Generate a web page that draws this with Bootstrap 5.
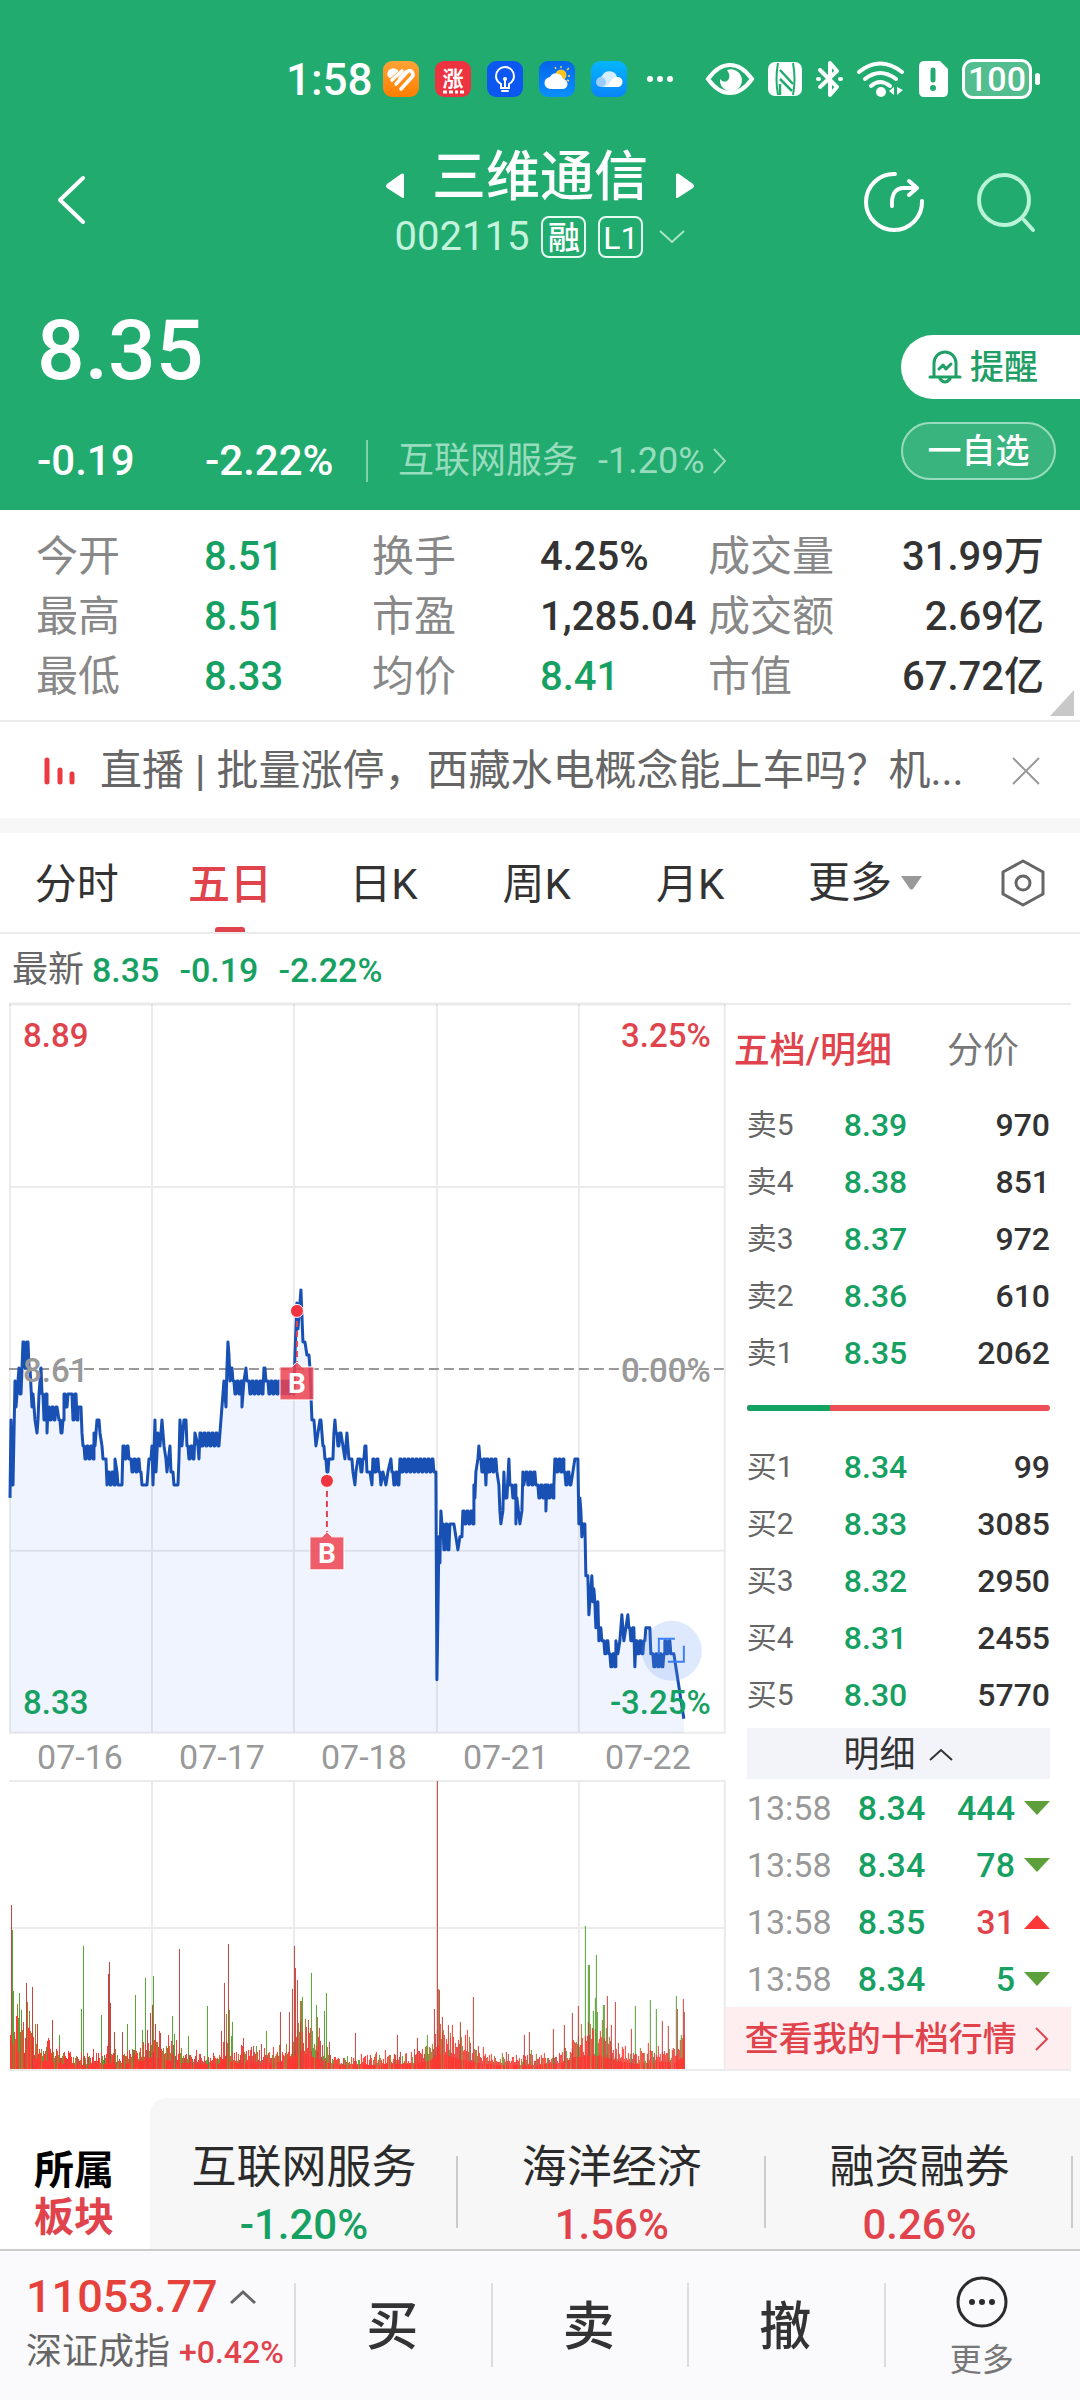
<!DOCTYPE html>
<html lang="zh-CN">
<head>
<meta charset="utf-8">
<meta name="viewport" content="width=device-width, initial-scale=1">
<title>三维通信 002115</title>
<link href="https://cdn.jsdelivr.net/npm/bootstrap@5.3.0/dist/css/bootstrap.min.css" rel="stylesheet">
<style>
:root{--down:#16a163;--up:#e0434c;--brand:#22ab6f;--ink:#333;--rule:#ebebeb}
body{font-family:Roboto,"Noto Sans CJK SC",sans-serif;color:var(--ink);background:#fff;line-height:1}
a{color:inherit;text-decoration:none}
button{background:none;border:0;padding:0;color:inherit;font-weight:inherit}
svg{display:block;flex:none;overflow:visible}
th{font-weight:400}
.down{color:var(--down)} .up{color:var(--up)} .muted{color:#777}
.medium{font-weight:500}
.f30{font-size:30px}.f32{font-size:32px}.f34{font-size:34px}.f36{font-size:36px}.f40{font-size:40px}.f42{font-size:42px}

.hero{background:var(--brand);color:#fff}
.statusbar{padding:59px 40px 0 286px;height:99px}
.clock{font-size:44px;line-height:44px;width:97px;padding-top:2px}
.appicons{gap:16px}
.sys{gap:14px}
.battery{width:70px;height:40px;border:3px solid #fff;border-radius:11px;background:#ffffff38;font-size:34px;line-height:34px;text-align:center}
.nub{width:5px;height:12px;border-radius:3px;background:#fff;margin-left:3px}
.titlebar{padding-top:50px}
.side{flex:1 1 0;padding-bottom:4px}
.stock{font-size:54px;line-height:58px}
.codeline{height:42px;margin-top:9px;gap:12px}
.tagbox{height:42px;width:45px;border:2px solid #e6fff3;border-radius:8px;line-height:40px;text-align:center}
.pale{color:#c3f3dc}
.quote{padding:48px 0 28px 37px}
.price{font-size:84px;line-height:90px}
.change{margin-top:44px;height:42px}
.change .c1{width:168px}.change .c2{width:161px}
.industry{border-left:2px solid #7fd0ab;color:#97dcbd;padding-left:30px;height:42px}
.remind{width:179px;height:64px;margin-top:29px;background:#fff;color:#1f9f66;border-radius:32px 0 0 32px;padding-left:27px;gap:8px}
.watch{width:155px;height:58px;margin:23px 24px 0 0;border:2px solid #97dcbd;border-radius:29px;background:#ffffff1c}

.stats{display:grid;grid-template-columns:repeat(6,1fr);padding:17px 36px 13px 36px;line-height:60px;border-bottom:2px solid var(--rule)}
.stats dt{font-weight:400;font-size:42px;color:#888}
.stats dd{margin:0;font-size:40px;font-weight:500;white-space:nowrap}
.stats dd.last{text-align:right}
.fold{right:6px;bottom:6px}

.news{height:96px;padding:2px 40px 0 44px;color:#666}
.news .headline{margin-left:25px;line-height:60px}
.news .bar{margin:0 11px}
.band{height:15px;background:#f7f7f7}

.tabs{height:101px;border-bottom:2px solid var(--rule)}
.tabs button{flex:0 0 14.2%;line-height:104px;position:relative;height:99px}
.tabs .wide{flex:1 1 0;padding-right:36px}
.tabs .cog{flex:0 0 80px}
.tabs .on::after{content:"";position:absolute;left:50%;bottom:0;width:30px;height:5px;margin-left:-15px;border-radius:3px 3px 0 0;background:var(--up)}
.latest{height:69px;padding:2px 0 0 12px;color:#666}
.latest .figs{font-size:34px;gap:20px}

.board{margin:0 9px}
.pane{flex:0 0 67.5%;min-width:0}
.pane svg{width:100%;height:auto}
.lab{position:absolute;font-size:33px;line-height:34px;font-weight:500}
.lab.l{left:14px}.lab.r{right:15px}
.lab.t{top:16px}.lab.m{top:351px;color:#999}.lab.b{bottom:14px}
.days{height:46px;line-height:46px;color:#999;padding:0 7px 0 0}
.depth{border-top:2px solid var(--rule);border-bottom:2px solid var(--rule)}
.depthtabs{height:91px;padding:0 52px 0 8px;line-height:93px}
.inner{margin:0 21px}
.inner tr{height:57px}
.inner td,.inner th{padding:0;vertical-align:middle}
.book th{width:97px;color:#666}
.balance{height:57px;padding-bottom:3px}
.balance .track{height:6px;border-radius:3px;overflow:hidden;background:#ee4f55}
.balance .fill{background:#12a363}
.detail{height:51px;background:#f3f4f9;margin-top:5px;padding-top:2px;gap:14px;width:100%}
.ticks td:first-child{width:111px;color:#999}
.ticks td:last-child{width:35px}
.ten{height:62px;background:#ffeef0;color:var(--up);padding:2px 22px 0 19px}

.sector{padding-top:27px;background:#fff}
.sector .name{width:150px;padding:49px 0 0 34px;font-size:40px;line-height:47px}
.sector .list{background:#f7f7f7;border-radius:16px 0 0 0;height:151px}
.sector .item{flex:0 0 33.1%;padding-top:41px;text-align:center;position:relative}
.sector .item::after{content:"";position:absolute;right:0;top:58px;height:72px;border-right:2px solid #ccc}
.sector .item b{display:block;font-weight:400;font-size:45px;line-height:58px;color:#2b2b2b}
.sector .item span{display:block;font-size:42px;font-weight:500;line-height:56px}

.dock{height:151px;background:#fafafc;border-top:2px solid #ccc}
.index{width:294px;padding:20px 0 0 26px}
.index .num{font-size:45px;line-height:52px;color:#e6423c;gap:12px}
.index .sub{line-height:58px;color:#666;gap:9px}
.act{flex:1 1 0;font-size:52px;position:relative;padding-top:4px}
.act::before{content:"";position:absolute;left:0;top:32px;height:84px;border-left:2px solid #ddd}
.act.more{padding-top:0}
</style>
</head>
<body>

<header class="hero">
  <div class="statusbar d-flex align-items-center">
    <div class="clock medium">1:58</div>
    <div class="appicons d-flex align-items-center">
      <svg width="36" height="36" viewBox="0 0 36 36"><defs><linearGradient id="o" x2="0" y2="1"><stop stop-color="#ffa336"/><stop offset="1" stop-color="#ff7e00"/></linearGradient><linearGradient id="s" x2="0" y2="1"><stop stop-color="#0464ea"/><stop offset="1" stop-color="#0a90ff"/></linearGradient><linearGradient id="c" x2="0" y2="1"><stop stop-color="#05b6fb"/><stop offset="1" stop-color="#0a84fb"/></linearGradient></defs><rect width="36" height="36" rx="9" fill="url(#o)"/><g stroke="#fff" stroke-width="3.600" stroke-linecap="round" fill="none"><path d="M6 14q0-4 4-5 2 0 3 1l-6 5"/><path d="M9 19L19 10"/><path d="M13 23L24 11q3-3 5 0t0 5L18 28"/><path d="M17 17l6-6"/></g></svg>
      <svg width="36" height="36" viewBox="0 0 36 36"><rect width="36" height="36" rx="9" fill="#ee3340"/><text x="18" y="25" font-size="21" font-weight="700" fill="#fff" text-anchor="middle" font-family="Noto Sans CJK SC">涨</text><path d="M8 31h4m2 0h4m2 0h3m2 0h4" stroke="#fff" stroke-width="3"/></svg>
      <svg width="36" height="36" viewBox="0 0 36 36"><rect width="36" height="36" rx="9" fill="#0b57f0"/><path d="M14 27v-4q-5-3-5-8a9 9 0 0118 0q0 5-5 8v4zM15 30h6M18 26v-8" fill="none" stroke="#fff" stroke-width="2" stroke-linecap="round"/><circle cx="18" cy="18" r="2" fill="#fff"/></svg>
      <svg width="36" height="36" viewBox="0 0 36 36"><rect width="36" height="36" rx="9" fill="url(#s)"/><circle cx="22" cy="14" r="5.500" fill="#ffc21f"/><path d="M22 7V5M28 9l2-2M29 15h2M17 8l-1-2M28 19l2 1" stroke="#ffd257" stroke-width="1.400"/><path d="M12 28a6 6 0 01-1-12 7 7 0 0113 2 5 5 0 01-1 10z" fill="#fff"/></svg>
      <svg width="36" height="36" viewBox="0 0 36 36"><rect width="36" height="36" rx="9" fill="url(#c)"/><path d="M12 26a6 6 0 01-1-11 8 8 0 0115 1 5 5 0 01-1 10z" fill="#d6edff"/><path d="M14 26q4-2 6-6t6-4a5 5 0 011 10z" fill="#fff"/><circle cx="10" cy="21" r="5" fill="#9ccdfc"/></svg>
    </div>
    <svg class="ms-3 me-auto" width="34" height="8" viewBox="0 0 34 8" fill="#fff"><circle cx="7" cy="4" r="3"/><circle cx="17" cy="4" r="3"/><circle cx="27" cy="4" r="3"/></svg>
    <div class="sys d-flex align-items-center">
      <svg width="48" height="34" viewBox="0 0 48 34"><path d="M2 17Q12 3 24 3t22 14Q36 31 24 31T2 17z" fill="none" stroke="#fff" stroke-width="4"/><path d="M21 8a11 11 0 11-7 9q3 4 7 2 5-4 0-11z" fill="#fff"/></svg>
      <svg width="34" height="34" viewBox="0 0 34 34"><rect width="34" height="34" rx="7" fill="#fff"/><path d="M10 1q-3 16 0 32M25 1q3 16 0 32" stroke="#22ab6f" stroke-width="2" fill="none"/><path d="M12 8l13 14M12 17l12 12M12 22v11" stroke="#22ab6f" stroke-width="2.500"/></svg>
      <svg width="27" height="38" viewBox="0 0 27 38" fill="none" stroke="#fff" stroke-width="4" stroke-linejoin="round" stroke-linecap="round"><path d="M4 10l17 17-7 8V3l7 8L4 27"/><path d="M2 19h1M24 19h1"/></svg>
      <svg width="48" height="36" viewBox="0 0 48 36" fill="none" stroke="#fff" stroke-width="4" stroke-linecap="round"><path d="M2 11q21-17 43 0M8 18q15-12 31 0M14 25q9-8 19 0"/><circle cx="24" cy="31" r="5" fill="#fff" stroke="none"/><path d="M37 26v8l-5-4zM40 26v8l6-5z" fill="#fff" stroke="none"/></svg>
      <svg width="29" height="36" viewBox="0 0 29 36"><path d="M5 0h16l8 8v22q0 6-5 6H5q-5 0-5-6V6q0-6 5-6z" fill="#fff"/><path d="M14 9v10" stroke="#22ab6f" stroke-width="5" stroke-linecap="round"/><circle cx="14" cy="27" r="3" fill="#22ab6f"/></svg>
      <div class="d-flex align-items-center"><div class="battery medium">100</div><div class="nub"></div></div>
    </div>
  </div>

  <div class="titlebar d-flex align-items-center">
    <div class="side ps-4"><button type="button" aria-label="返回" class="ms-4"><svg class="ms-2" width="30" height="50" viewBox="0 0 30 50" fill="none" stroke="#fff" stroke-width="4" stroke-linecap="round" stroke-linejoin="round"><path d="M27 3L4 25l23 22"/></svg></button></div>
    <div>
      <div class="d-flex justify-content-center align-items-center">
        <button type="button" aria-label="上一只" class="mt-3"><svg width="18" height="26" viewBox="0 0 18 26" fill="#fff"><path d="M18 1v24q-2 0-3-1L1 15q-2-2 0-4L15 1q1-1 3 0z"/></svg></button>
        <h1 class="stock medium mb-0 mx-4 px-1">三维通信</h1>
        <button type="button" aria-label="下一只" class="mt-3"><svg width="18" height="26" viewBox="0 0 18 26" fill="#fff"><path d="M0 1v24q2 0 3-1l14-9q2-2 0-4L3 1Q2 0 0 1z"/></svg></button>
      </div>
      <div class="codeline d-flex align-items-center justify-content-center">
        <span class="pale f40">002115</span><span class="tagbox medium f32">融</span><span class="tagbox f32">L1</span>
        <svg class="ms-1" width="26" height="14" viewBox="0 0 26 14" fill="none" stroke="#a9e6ca" stroke-width="2"><path d="M1 1l12 11L25 1"/></svg>
      </div>
    </div>
    <div class="side d-flex justify-content-end pe-4">
      <button type="button" aria-label="分享" class="me-5"><svg class="me-1" width="60" height="60" viewBox="0 0 60 60" fill="none" stroke="#fff" stroke-width="4" stroke-linecap="round" stroke-linejoin="round"><path d="M31 2a28 28 0 1027 27"/><path d="M28 34q-1-18 12-18h13M45 9l8 7-8 7"/></svg></button>
      <button type="button" aria-label="搜索" class="me-3"><svg class="me-1" width="60" height="60" viewBox="0 0 60 60" fill="none" stroke="#b9f3d8" stroke-width="4" stroke-linecap="round"><circle cx="28" cy="28" r="25"/><path d="M48 48l9 10"/></svg></button>
    </div>
  </div>

  <div class="quote d-flex justify-content-between align-items-start">
    <div>
      <div class="price medium">8.35</div>
      <div class="change d-flex align-items-center f42">
        <span class="c1 medium">-0.19</span><span class="c2 medium">-2.22%</span>
        <a href="#" class="industry d-flex align-items-center f36"><span>互联网服务</span><span class="ms-3 ps-1">-1.20%</span>
          <svg class="ms-2" width="14" height="26" viewBox="0 0 14 26" fill="none" stroke="currentColor" stroke-width="2"><path d="M1 1l11 12L1 25"/></svg></a>
      </div>
    </div>
    <div class="d-flex flex-column align-items-end">
      <button type="button" class="remind medium f34 d-flex align-items-center">
        <svg width="34" height="36" viewBox="0 0 34 36" fill="none" stroke="#1f9f66" stroke-width="3" stroke-linejoin="round" stroke-linecap="round"><path d="M6 28V14a11 11 0 0122 0v14M2 28h30M12 30q5 6 10 0"/><path d="M11 20l4-4 3 4 5-5"/></svg>提醒</button>
      <button type="button" class="watch medium f34">一自选</button>
    </div>
  </div>
</header>

<main>
  <div class="position-relative">
    <dl class="stats mb-0">
      <dt>今开</dt><dd class="down">8.51</dd><dt>换手</dt><dd>4.25%</dd><dt>成交量</dt><dd class="last">31.99万</dd>
      <dt>最高</dt><dd class="down">8.51</dd><dt>市盈</dt><dd>1,285.04</dd><dt>成交额</dt><dd class="last">2.69亿</dd>
      <dt>最低</dt><dd class="down">8.33</dd><dt>均价</dt><dd class="down">8.41</dd><dt>市值</dt><dd class="last">67.72亿</dd>
    </dl>
    <svg class="fold position-absolute" width="24" height="26" viewBox="0 0 24 26"><path d="M24 0v26H0z" fill="#c8c8c8"/></svg>
  </div>

  <div class="news d-flex align-items-center">
    <svg width="31" height="28" viewBox="0 0 31 28" stroke="#ec3a43" stroke-width="5" stroke-linecap="round"><path d="M3 3v22M16 13v12M28 17v8"/></svg>
    <a href="#" class="headline f42 flex-grow-1 text-nowrap">直播<span class="bar medium">|</span>批量涨停，西藏水电概念能上车吗？机...</a>
    <button type="button" aria-label="关闭"><svg width="28" height="28" viewBox="0 0 28 28" stroke="#999" stroke-width="2"><path d="M1 1l26 26M27 1L1 27"/></svg></button>
  </div>
  <div class="band"></div>

  <nav class="tabs d-flex align-items-center f42" aria-label="周期">
    <button type="button">分时</button>
    <button type="button" class="on up medium">五日</button>
    <button type="button">日K</button>
    <button type="button">周K</button>
    <button type="button">月K</button>
    <button type="button" class="wide d-flex align-items-center justify-content-center">更多<svg class="ms-2" width="23" height="14" viewBox="0 0 23 14"><path d="M1 0h21l-9 13q-2 1-3 0z" fill="#999"/></svg></button>
    <button type="button" class="cog" aria-label="设置"><svg width="46" height="48" viewBox="0 0 46 48" fill="none" stroke="#666" stroke-width="3" stroke-linejoin="round"><path d="M23 2l20 11v22L23 46 3 35V13z"/><circle cx="23" cy="24" r="7"/></svg></button>
  </nav>

  <div class="latest f36 d-flex align-items-center"><span>最新</span><div class="figs down medium d-flex ms-2"><span>8.35</span><span>-0.19</span><span>-2.22%</span></div></div>

  <section class="board d-flex">
    <div class="pane">
      <div class="position-relative">
        <svg viewBox="9 0 717 731" role="img" aria-label="五日分时走势">
          <path id="area" fill="#eff4fe"/>
          <g stroke="#000" stroke-opacity=".08" stroke-width="2" fill="none"><path d="M10 1v730M152 1v730M294 1v730M437 1v730M579 1v730M725 1v730M9 184h717M9 548h717M9 730h717"/><path d="M9 1h717" stroke-width="3"/></g>
          <path d="M9 366h717" stroke="#999" stroke-width="2" stroke-dasharray="10 5"/>
          <path id="line" fill="none" stroke="#1850b4" stroke-width="3" stroke-linejoin="round"/>
          <g id="marks"></g>
          <circle cx="672" cy="648" r="30" fill="#5f92f5" fill-opacity=".2"/>
          <path d="M659 651v-15h16M684 643v16h-16" fill="none" stroke="#3b7ff2" stroke-width="2"/>
        </svg>
        <span class="lab l t up">8.89</span><span class="lab r t up">3.25%</span>
        <span class="lab l m">8.61</span><span class="lab r m">0.00%</span>
        <span class="lab l b down">8.33</span><span class="lab r b down">-3.25%</span>
      </div>
      <div class="days d-flex f34 text-center">
        <span class="flex-fill">07-16</span><span class="flex-fill">07-17</span><span class="flex-fill">07-18</span><span class="flex-fill">07-21</span><span class="flex-fill">07-22</span>
      </div>
      <svg viewBox="9 0 717 291" role="img" aria-label="成交量">
        <path d="M152 1v289M294 1v289M437 1v289M579 1v289M725 1v289M9 1h717M9 148h717M9 290h717" stroke="#ebebeb" stroke-width="2"/>
        <g id="vol" stroke-width="1"></g>
      </svg>
    </div>

    <aside class="depth flex-grow-1">
      <div class="depthtabs d-flex justify-content-between f36">
        <button type="button" class="up medium">五档/明细</button><button type="button" class="muted">分价</button>
      </div>
      <div class="inner">
        <table class="book w-100 f32">
          <tr><th class="f30" scope="row">卖5</th><td class="down medium">8.39</td><td class="text-end medium">970</td></tr>
          <tr><th class="f30" scope="row">卖4</th><td class="down medium">8.38</td><td class="text-end medium">851</td></tr>
          <tr><th class="f30" scope="row">卖3</th><td class="down medium">8.37</td><td class="text-end medium">972</td></tr>
          <tr><th class="f30" scope="row">卖2</th><td class="down medium">8.36</td><td class="text-end medium">610</td></tr>
          <tr><th class="f30" scope="row">卖1</th><td class="down medium">8.35</td><td class="text-end medium">2062</td></tr>
        </table>
        <div class="balance d-flex align-items-center"><div class="track w-100 d-flex"><div class="fill" style="width:27.5%"></div></div></div>
        <table class="book w-100 f32">
          <tr><th class="f30" scope="row">买1</th><td class="down medium">8.34</td><td class="text-end medium">99</td></tr>
          <tr><th class="f30" scope="row">买2</th><td class="down medium">8.33</td><td class="text-end medium">3085</td></tr>
          <tr><th class="f30" scope="row">买3</th><td class="down medium">8.32</td><td class="text-end medium">2950</td></tr>
          <tr><th class="f30" scope="row">买4</th><td class="down medium">8.31</td><td class="text-end medium">2455</td></tr>
          <tr><th class="f30" scope="row">买5</th><td class="down medium">8.30</td><td class="text-end medium">5770</td></tr>
        </table>
        <button type="button" class="detail f36 d-flex align-items-center justify-content-center">明细<svg width="24" height="13" viewBox="0 0 24 13" fill="none" stroke="#333" stroke-width="2"><path d="M1 12L12 2l11 10"/></svg></button>
        <table class="ticks w-100 f34">
          <tr><td>13:58</td><td class="down medium">8.34</td><td class="text-end down medium">444</td><td><svg class="ms-auto" width="26" height="14" viewBox="0 0 26 14"><path d="M0 0h26L13 14z" fill="#5da03b"/></svg></td></tr>
          <tr><td>13:58</td><td class="down medium">8.34</td><td class="text-end down medium">78</td><td><svg class="ms-auto" width="26" height="14" viewBox="0 0 26 14"><path d="M0 0h26L13 14z" fill="#5da03b"/></svg></td></tr>
          <tr><td>13:58</td><td class="down medium">8.35</td><td class="text-end up medium">31</td><td><svg class="ms-auto" width="26" height="14" viewBox="0 0 26 14"><path d="M0 14h26L13 0z" fill="#fb3737"/></svg></td></tr>
          <tr><td>13:58</td><td class="down medium">8.34</td><td class="text-end down medium">5</td><td><svg class="ms-auto" width="26" height="14" viewBox="0 0 26 14"><path d="M0 0h26L13 14z" fill="#5da03b"/></svg></td></tr>
        </table>
      </div>
      <a href="#" class="ten f34 medium d-flex align-items-center justify-content-between"><span>查看我的十档行情</span><svg width="14" height="24" viewBox="0 0 14 24" fill="none" stroke="currentColor" stroke-width="2"><path d="M1 1l11 11L1 23"/></svg></a>
    </aside>
  </section>

  <section class="sector d-flex">
    <div class="name fw-bold"><div class="text-black">所属</div><div class="up">板块</div></div>
    <div class="list d-flex flex-grow-1">
      <a href="#" class="item"><b>互联网服务</b><span class="down">-1.20%</span></a>
      <a href="#" class="item"><b>海洋经济</b><span class="up">1.56%</span></a>
      <a href="#" class="item"><b>融资融券</b><span class="up">0.26%</span></a>
    </div>
  </section>
</main>

<footer class="dock d-flex">
  <a href="#" class="index text-nowrap">
    <div class="num medium d-flex align-items-center">11053.77<svg width="26" height="14" viewBox="0 0 26 14" fill="none" stroke="#666" stroke-width="3"><path d="M1 13L13 2l12 11"/></svg></div>
    <div class="sub d-flex f36"><span>深证成指</span><span class="f32 up medium">+0.42%</span></div>
  </a>
  <button type="button" class="act medium">买</button>
  <button type="button" class="act medium">卖</button>
  <button type="button" class="act medium">撤</button>
  <button type="button" class="act more d-flex flex-column align-items-center justify-content-center">
    <svg width="52" height="52" viewBox="0 0 52 52"><circle cx="26" cy="26" r="24" fill="none" stroke="#2b2b2b" stroke-width="3"/><g fill="#2b2b2b"><circle cx="16" cy="26" r="3"/><circle cx="26" cy="26" r="3"/><circle cx="36" cy="26" r="3"/></g></svg>
    <span class="f32 mt-3 muted">更多</span>
  </button>
</footer>

<script src="https://cdn.jsdelivr.net/npm/bootstrap@5.3.0/dist/js/bootstrap.bundle.min.js"></script>
<script>
// Prices in cents relative to the 8.61 close. "x:c" is a tick, "x-x2:a,b" a run flickering between two prices.
const ticks = `10:-10 11:-4 12:-9 13:-9 14:-5 15:-1 16:-3 18:-1 19:0 20:-2 21:-2 22:0 23-29:2,0 30:0 32:-3 33:-2 35:-4 37:-5 38:-4 39:-2 41:0 42-46:-2,-4 47:-5 48-56:-3,-4 57:-3 59-63:-4,-5 64-68:-2,-3 70:-2 71-77:-2,-4 78:-3 81:-3 82:-5 83-93:-6,-7 94:-5 95:-6 97:-4 99:-4 100:-5 102:-6 103:-7 106:-7 107:-9 108-114:-8,-9 115:-7 117:-8 118:-9 122:-9 123-129:-6,-7 130-141:-7,-8 142:-9 147:-9 148:-8 149:-7 151:-7 152:-6 153:-9 155:-4 156:-8 158:-5 160:-6 162:-4 164:-6 166:-7 167:-8 170:-6 171:-8 173:-8 174:-9 178:-9 179:-7 180:-4 182:-6 184:-4 186:-4 187-194:-6,-7 195:-5 198:-6 199:-7 200-218:-5,-6 219:-6 221:-4 222:-3 224:-1 226:-3 227:0 228:2 229:1 230:-1 231:0 232:0 233-241:-1,-2 242:-3 244:-1 246:0 247:-1 248-262:-1,-2 264:0 265:0 266:-1 267-294:-1,-2 295:1 296:3 297:5 298:3 300:5 301:6 302:4 303:2 305:2 307:1 309:1 310:0 311:-2 312:-4 314:-4 315:-5 316:-6 318:-5 320:-4 321:-4 323:-6 324:-6 325-330:-7,-8 331:-7 333:-7 334:-5 335:-4 336-341:-5,-6 343:-6 345:-7 346:-6 347:-5 349:-7 352:-7 353:-8 355:-9 356:-8 358:-7 359-364:-7,-8 365:-6 366:-6 367:-8 370:-8 372:-9 373-379:-7,-8 381:-9 383:-8 386:-9 388:-8 391:-7 392-399:-8,-9 400-435:-7,-8 436:-8 437:-24 438:-19 439:-13 440:-15 441:-11 442-449:-12,-14 450:-12 454:-12 456:-13 458:-14 460:-13 462:-13 463-473:-11,-12 474:-9 475:-10 476:-8 478:-7 479:-6 480-485:-7,-8 486:-9 487-496:-7,-8 497:-8 499:-9 500:-11 501:-12 503:-11 504:-8 505:-10 507:-10 509:-7 510:-9 511-515:-9,-10 516:-12 517:-10 520:-12 522:-11 523:-8 524:-9 526-536:-8,-9 537-545:-9,-10 546:-11 547-553:-9,-10 554:-9 555-563:-7,-8 564-571:-8,-9 573:-8 575:-7 578:-7 579:-12 580:-10 581:-11 582:-13 583:-12 585:-12 586:-16 588:-16 589:-19 590:-18 592:-16 593:-18 594:-17 595:-18 596:-20 598:-18 599:-21 601:-20 602:-21 603-608:-21,-22 609-615:-22,-23 616:-21 618:-22 620:-21 622:-19 624:-21 626:-20 628:-19 629-633:-20,-21 635:-23 636-645:-21,-22 646:-20 650:-20 651:-22 652-664:-22,-23 665-672:-21,-22 674:-22 676:-23 678:-24 680:-25 682:-26 684:-27`;
const pts = [];
ticks.split(" ").forEach(t => {
  const [xs, cs] = t.split(":"), [a, b] = xs.split("-").map(Number), [p, q] = cs.split(",").map(Number);
  if (b === undefined) pts.push([a, p]);
  else for (let x = a, i = 0; x <= b; x += 2, i++) pts.push([x, i % 2 ? q : p], [x + 1, i % 2 ? q : p]);
});
const d = "M" + pts.map(([x, c]) => x + " " + (365 - 13 * c)).join("L");
document.getElementById("line").setAttribute("d", d);
document.getElementById("area").setAttribute("d", d + "V730H10Z");

document.getElementById("marks").innerHTML = [[297, 308], [327, 478]].map(([x, y]) =>
  `<path d="M${x} ${y + 10}V${y + 52}" stroke="#e0434c" stroke-width="2" stroke-dasharray="6 4"/>
   <circle cx="${x}" cy="${y}" r="6.500" fill="#f03540" stroke="#fff"/>
   <path d="M${x - 17} ${y + 56}h12l5-5 5 5h12v33h-34z" fill="#ee4452" fill-opacity=".86" stroke="#fff"/>
   <text x="${x}" y="${y + 82}" text-anchor="middle" font-size="28" font-weight="700" fill="#fff">B</text>`).join("");

// Volume: mean height along the axis, plus the outstanding minutes as x,height,colour.
const mean = [[10,52],[25,36],[40,22],[60,14],[80,10],[110,14],[125,13],[145,22],[153,32],[165,22],[185,14],[210,12],[218,12],[225,25],[235,14],[250,17],[275,15],[290,26],[300,42],[320,24],[330,14],[345,9],[380,11],[415,13],[430,22],[440,38],[460,24],[480,14],[500,9],[540,11],[560,13],[575,30],[600,34],[615,20],[635,13],[660,17],[675,16],[684,32]];
const peaks = "11,164,r 12,139,g 13,78,g 17,65,b 21,59,g 26,86,r 32,82,r 29,58,b 37,45,r 52,49,r 59,34,g 81,60,g 83,123,g 101,54,g 109,107,r 108,95,r 110,66,r 114,37,r 122,37,r 127,45,g 135,74,g 142,39,g 145,91,g 150,56,r 152,64,r 153,93,g 155,45,r 160,36,r 172,53,g 179,120,r 188,33,g 207,63,g 221,38,r 224,86,r 226,55,b 228,125,r 229,59,g 232,47,g 243,31,r 266,38,g 280,57,r 289,57,r 292,80,r 294,123,r 295,101,r 297,89,r 300,68,b 301,68,b 302,72,g 311,96,g 316,64,g 317,52,b 324,58,g 326,76,g 355,36,r 397,34,r 417,31,r 427,34,g 434,60,r 437,288,r 438,80,b 439,79,r 442,52,r 450,36,b 460,47,r 473,72,r 524,34,r 529,37,r 553,40,r 564,44,r 572,56,r 578,63,r 581,45,b 585,143,g 588,104,g 589,104,g 596,114,g 595,71,g 593,58,g 607,73,r 603,64,g 604,64,g 615,67,r 611,44,r 631,40,r 635,63,g 650,69,g 656,60,g 662,48,r 668,43,r 676,73,g 677,60,r 683,70,r 684,57,r";
let seed = 11;
const rnd = () => (seed = (seed * 16807) % 2147483647) / 2147483647;
const bars = { r: "", b: "", g: "", s: "" }, bar = (k, x, h) => bars[k] += `M${x}.5 289v-${h}`;
for (let x = 10; x <= 684; x++) {
  const i = mean.findIndex(m => m[0] > x), [x1, h1] = mean[(i < 0 ? mean.length : i) - 1], [x2, h2] = mean[i < 0 ? mean.length - 1 : i];
  const m = x2 > x1 ? h1 + (h2 - h1) * (x - x1) / (x2 - x1) : h1;
  const k = rnd() < .68 ? "r" : rnd() < .6 ? "b" : "g";
  bar(k === "r" && rnd() < .25 ? "s" : k, x, Math.round(m * (.4 + .8 * rnd() + .8 * rnd() ** 4)));
  if (rnd() < .6) bar("r", x, Math.round(m * .4));
}
peaks.split(" ").forEach(p => { const [x, h, k] = p.split(","); bar(k === "r" ? "s" : k, x, h); });
const tint = { b: "#a5782f", g: "#55a234", s: "#c3443e", r: "#fe3832" };
document.getElementById("vol").innerHTML = Object.keys(tint).map(k => `<path d="${bars[k]}" stroke="${tint[k]}"/>`).join("");
</script>
</body>
</html>
